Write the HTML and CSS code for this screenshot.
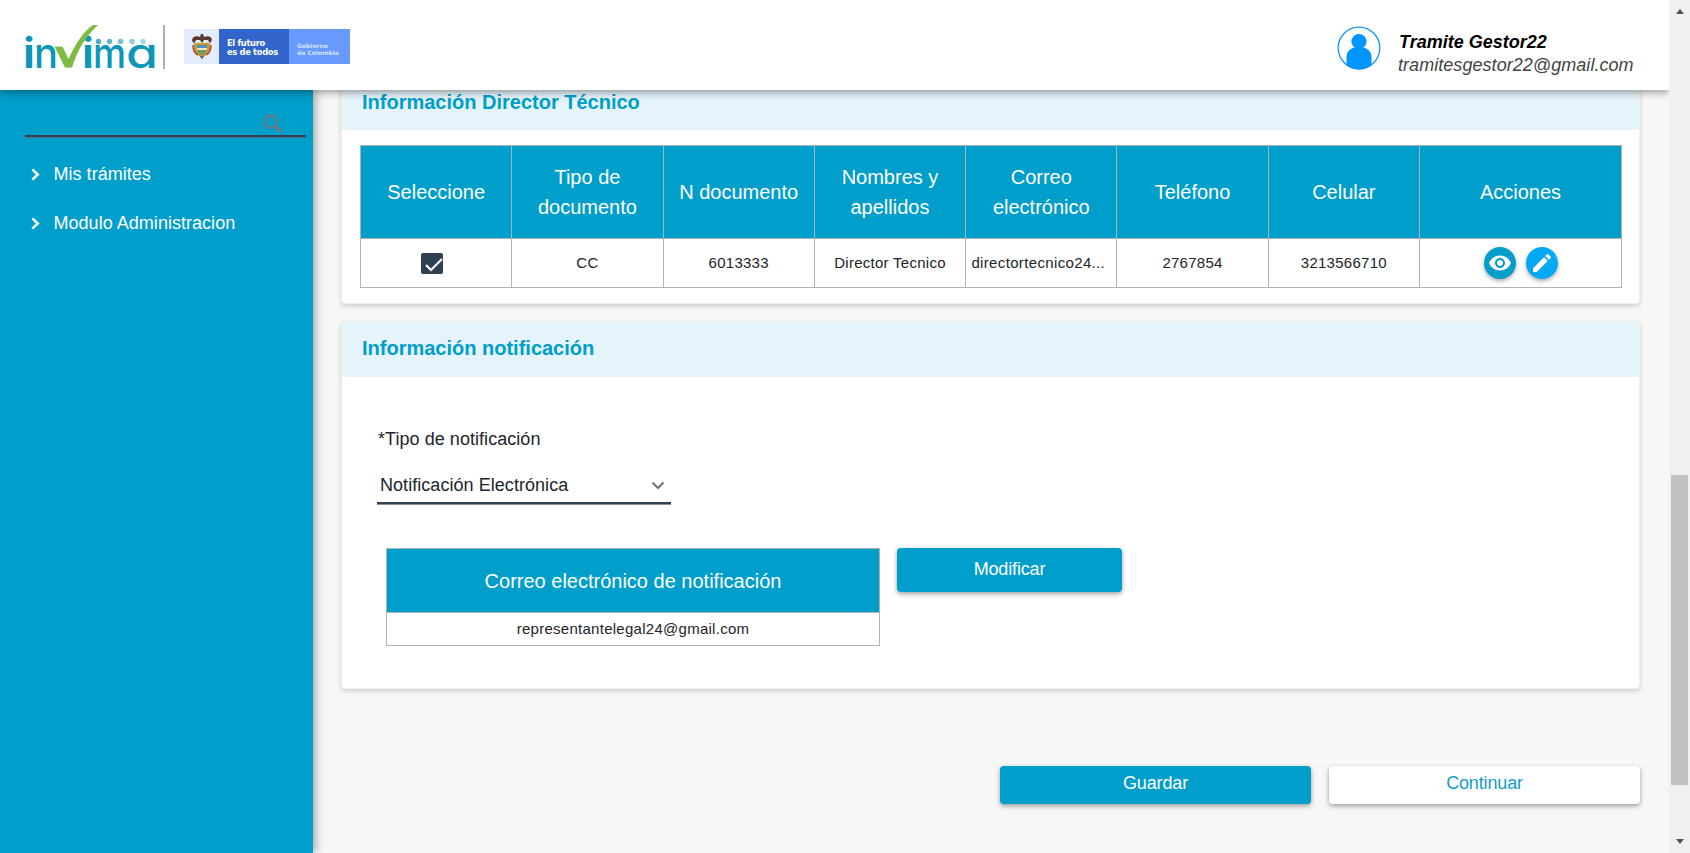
FILE: index.html
```html
<!DOCTYPE html>
<html lang="es">
<head>
<meta charset="utf-8">
<title>Invima - Trámites</title>
<link rel="stylesheet" href="styles.css">
</head>
<body>
<div class="app">
  <div class="page">
    <header class="header">
      <svg class="logo" width="146" height="50" viewBox="20 20 146 50">
        <g class="logo-text">
          <text x="23.300" y="67.500" class="logo-stem">i</text>
          <text x="34" y="67.500" textLength="24" lengthAdjust="spacingAndGlyphs">n</text>
          <text x="82.300" y="67.500" class="logo-stem">i</text>
          <text x="93" y="67.500" textLength="33" lengthAdjust="spacingAndGlyphs">m</text>
          <text x="126" y="67.500" textLength="32" lengthAdjust="spacingAndGlyphs">a</text>
        </g>
        <path d="M54.500 46.500h8l6 12.500C76 43 83 32 93 25h5C86 36 78 49 72 67.500h-7z" fill="#80ba41"/>
        <g fill="#1c9abb">
          <circle cx="98.500" cy="41.500" r="2.700" opacity=".8"/>
          <circle cx="109.500" cy="41.500" r="2.700" opacity=".7"/>
          <circle cx="120.500" cy="41.500" r="2.700" opacity=".6"/>
          <circle cx="132" cy="41.500" r="2.700" opacity=".5"/>
          <circle cx="143" cy="41.500" r="2.700" opacity=".4"/>
        </g>
        <path d="M164 25v44" stroke="#a9b0b7" stroke-width="2"/>
      </svg>
      <div class="gov">
        <div class="gov-shield">
          <svg width="24" height="28" viewBox="0 0 24 28">
            <path d="M2 8C3 3 8 4 10 5l1-3h2l1 3c3-1 7-2 8 3-1 2-2 2-2 4l-2-4h-4l-2 3-2-3H6l-2 4C4 10 2 10 2 8z" fill="#5a3a2c"/>
            <path d="M4 12c3-2 5-1 8-1s5-1 8 1c1 7-2 11-8 13C6 23 3 19 4 12z" fill="#c9982f"/>
            <path d="M7 13h10v3H7z" fill="#4b94bd"/>
            <path d="M7 16h10v2H7z" fill="#f1e7c5"/>
            <path d="M7 18h10c-1 3-3 4-5 5-2-1-4-2-5-5z" fill="#6d9b63"/>
            <path d="M3 13c0 5 1 8 5 10M21 13c0 5-1 8-5 10" fill="none" stroke="#b5433b" stroke-width="1.500"/>
            <path d="M9 23l3 2 3-2-3 4z" fill="#5a3a2c"/>
          </svg>
        </div>
        <div class="gov-motto">El futuro<br>es de todos</div>
        <div class="gov-name">Gobierno<br>de Colombia</div>
      </div>
      <div class="user">
        <svg width="44" height="44" viewBox="0 0 44 44">
          <defs><clipPath id="ring"><circle cx="22" cy="22" r="21.500"/></clipPath></defs>
          <circle cx="22" cy="22" r="20.800" fill="#fff" stroke="#0d94fb" stroke-width="1.300"/>
          <g fill="#0095ff" clip-path="url(#ring)">
            <circle cx="22" cy="15.500" r="7.600"/>
            <path d="M9.500 44V31c0-5 3.500-8.500 8-9.500h9c4.500 1 8 4.500 8 9.500v13z"/>
          </g>
        </svg>
        <div class="user-text">
          <div class="user-name">Tramite Gestor22</div>
          <div class="user-mail">tramitesgestor22@gmail.com</div>
        </div>
      </div>
    </header>
    <div class="body">
      <nav class="sidebar">
        <div class="search">
          <svg width="20" height="20" viewBox="0 0 20 20" fill="none" stroke="#73777b">
            <circle cx="7.700" cy="7.700" r="6.300" stroke-width="2"/>
            <path d="M12.300 12.300l6 6" stroke-width="2.800"/>
          </svg>
        </div>
        <a class="nav-item"><svg width="9" height="13" viewBox="0 0 9 13"><path d="M1.300 1.300L6.800 6.500l-5.500 5.200"/></svg><span>Mis trámites</span></a>
        <a class="nav-item"><svg width="9" height="13" viewBox="0 0 9 13"><path d="M1.300 1.300L6.800 6.500l-5.500 5.200"/></svg><span>Modulo Administracion</span></a>
      </nav>
      <main class="main">
        <section class="card card-director">
          <h2 class="card-title">Información Director Técnico</h2>
          <table class="grid">
            <thead>
              <tr><th>Seleccione</th><th>Tipo de documento</th><th>N documento</th><th>Nombres y apellidos</th><th>Correo electrónico</th><th>Teléfono</th><th>Celular</th><th class="col-actions">Acciones</th></tr>
            </thead>
            <tbody>
              <tr>
                <td><svg class="check" width="22" height="21" viewBox="0 0 22 21"><rect width="22" height="21" rx="2" fill="#2e4052"/><path d="M5 12l5 5L21 6" fill="none" stroke="#fff" stroke-width="2.200"/></svg></td>
                <td>CC</td><td>6013333</td><td>Director Tecnico</td><td class="mail-cell">directortecnico24...</td><td>2767854</td><td>3213566710</td>
                <td class="actions-cell">
                  <div class="actions">
                    <button class="round view"><svg width="24" height="24" viewBox="0 0 24 24"><path d="M12 4.500C7 4.500 2.730 7.610 1 12c1.730 4.390 6 7.500 11 7.500s9.270-3.110 11-7.500c-1.730-4.390-6-7.500-11-7.500zM12 17c-2.760 0-5-2.240-5-5s2.240-5 5-5 5 2.240 5 5-2.240 5-5 5zm0-8c-1.660 0-3 1.340-3 3s1.340 3 3 3 3-1.340 3-3-1.340-3-3-3z"/></svg></button>
                    <button class="round edit"><svg width="24" height="24" viewBox="0 0 24 24"><path d="M3 17.250V21h3.750L17.810 9.940l-3.750-3.750L3 17.250zM20.710 7.040c.39-.39.39-1.020 0-1.410l-2.340-2.340c-.39-.39-1.020-.39-1.410 0l-1.830 1.830 3.750 3.750 1.830-1.830z"/></svg></button>
                  </div>
                </td>
              </tr>
            </tbody>
          </table>
        </section>
        <section class="card card-notice">
          <h2 class="card-title">Información notificación</h2>
          <div class="notice">
            <div class="label">*Tipo de notificación</div>
            <div class="select"><span>Notificación Electrónica</span><svg width="14" height="10" viewBox="0 0 14 10"><path d="M1.500 1.500L7 7l5.500-5.500" fill="none" stroke="#757575" stroke-width="2.200"/></svg></div>
            <div class="notice-row">
              <table class="mail">
                <thead><tr><th>Correo electrónico de notificación</th></tr></thead>
                <tbody><tr><td>representantelegal24@gmail.com</td></tr></tbody>
              </table>
              <button class="btn modify">Modificar</button>
            </div>
          </div>
        </section>
        <div class="footer">
          <button class="btn">Guardar</button>
          <button class="btn plain">Continuar</button>
        </div>
      </main>
    </div>
  </div>
  <div class="scrollbar">
    <i class="arrow up"></i>
    <i class="thumb"></i>
    <i class="arrow down"></i>
  </div>
</div>
</body>
</html>
```
FILE: styles.css
```css
* { box-sizing: border-box; }
body { margin: 0; overflow: hidden; font: 18px "Liberation Sans", Arial, sans-serif; color: #212529; }
.app { display: flex; width: 1690px; height: 853px; background: #f7f7f7; }
.page { width: 1669px; height: 853px; display: flex; flex-direction: column; overflow: hidden; }

.header { position: relative; z-index: 3; flex: none; display: flex; align-items: flex-start; height: 90px; padding: 20px 0 0 20px; background: #fff; box-shadow: 0 2px 8px rgba(0,0,0,.42); }
.logo { display: block; overflow: visible; }
.logo-text { font-family: Inter, sans-serif; font-size: 42px; font-weight: 450; font-feature-settings: "cv11"; fill: #0b97b9; }
.logo-stem { font-weight: 700; }
.gov { display: flex; width: 166px; height: 35px; margin: 9px 0 0 18px; color: #fff; }
.gov-shield { width: 35px; padding: 3px 0 0 6px; background: #e3ecfb; }
.gov-shield svg { display: block; }
.gov-motto { width: 70px; padding: 10px 0 0 8px; background: #3265cc; font: bold 8.3px/8.800px "DejaVu Sans", sans-serif; white-space: nowrap; letter-spacing: -.3px; }
.gov-name { width: 61px; padding: 12.500px 0 0 8px; background: #6799fe; color: #d2e2ff; font: bold 6px/7.500px "DejaVu Sans", sans-serif; white-space: nowrap; letter-spacing: 0; }
.user { display: flex; gap: 16px; margin: 6px 35px 0 auto; font-style: italic; line-height: 23px; }
.user > svg { display: block; margin-left: -1px; margin-right: 1px; }
.user-text { padding-top: 5px; width: 236px; white-space: nowrap; }
.user-name { font-weight: bold; color: #000; padding-left: 1px; }
.user-mail { color: #444; letter-spacing: .05px; }

.body { flex: 1; display: flex; min-height: 0; }
.sidebar { position: relative; z-index: 2; width: 313px; flex: none; background: #009ecb; box-shadow: 2px 0 9px rgba(0,0,0,.38); }
.search { width: 281px; height: 47px; margin: 0 0 0 25px; padding: 24px 0 0 238px; border-bottom: 2px solid #2f4052; box-shadow: 0 1px 0 #4a7186; }
.search svg { display: block; }
.nav-item { display: flex; align-items: center; gap: 13.500px; height: 49px; padding-left: 31px; color: #fff; letter-spacing: .03px; }
.search + .nav-item { margin-top: 12px; }
.nav-item svg { fill: none; stroke: #fff; stroke-width: 2.500; margin-top: 1px; }
.nav-item span { padding-top: 1px; }

.main { flex: 1; padding-left: 28px; }
.card { width: 1299px; border: 1px solid #eff0e6; border-radius: 4px; background: #fff; box-shadow: 0 2px 5px rgba(0,0,0,.17); }
.card-director { height: 230px; margin-top: -16px; }
.card-notice { height: 368px; margin-top: 17px; }
.card-title { height: 55px; margin: 0; padding: 0 0 0 20px; border-radius: 3px 3px 0 0; background: #e5f4fa; color: #009ecb; font-size: 20px; line-height: 55px; }
.card-notice .card-title { line-height: 53px; }
table { border-collapse: collapse; table-layout: fixed; }
th { border: 1px solid #b1b4b7; background: #009ecb; color: #fff; font-size: 20px; font-weight: normal; line-height: 30px; padding: 0; }
td { border: 1px solid #b1b4b7; background: #fff; font-size: 15px; letter-spacing: .27px; text-align: center; padding: 0 0 2px; white-space: nowrap; }
.grid { width: 1262px; margin: 15px 0 0 18px; }
.grid th { height: 93px; padding: 0 12px; }
.grid td { height: 49px; }
.grid td.actions-cell { padding: 0 0 1px; }
.grid td.mail-cell { padding-right: 6px; letter-spacing: .35px; }
.col-actions { width: 202px; }
.check { display: block; margin: 2px auto 0; position: relative; left: -4px; }
.actions { display: flex; justify-content: center; gap: 10px; }
.round { display: flex; align-items: center; justify-content: center; width: 32px; height: 32px; padding: 0; border: 0; border-radius: 50%; box-shadow: 0 2px 4px rgba(0,0,0,.35); }
.round svg { fill: #fff; flex: none; }
.view { background: #009ecb; }
.edit { background: #03a9f4; }

.notice { padding: 51px 0 0 35px; }
.label { padding-left: 1px; line-height: 22px; letter-spacing: .05px; }
.select { display: flex; justify-content: space-between; align-items: flex-start; width: 294px; height: 30px; margin-top: 24px; padding: 0 6px 0 3px; border-bottom: 2px solid #2f4052; box-shadow: 0 1px 0 #8b959f; line-height: 22px; letter-spacing: .05px; }
.select svg { margin-top: 7px; }
.notice-row { display: flex; align-items: flex-start; gap: 17px; margin: 44px 0 0 9px; }
.mail { width: 494px; }
.mail th { height: 64px; }
.mail td { height: 33px; }
.btn { width: 311px; height: 38px; padding: 0 0 3px; border: 0; border-radius: 4px; background: #009ecb; color: #fff; font: 18px "Liberation Sans", Arial, sans-serif; letter-spacing: -.15px; box-shadow: 0 2px 5px rgba(0,0,0,.38); }
.modify { width: 225px; height: 44px; padding: 0 0 1px; }
.plain { background: #fff; color: #129cc8; }
.footer { display: flex; justify-content: flex-end; gap: 18px; margin: 77px 29px 0 0; }

.scrollbar { display: flex; flex-direction: column; align-items: center; width: 21px; height: 853px; padding: 9px 0; background: #f0f0f0; }
.arrow { border: 4.500px solid transparent; }
.up { border-top: 0; border-bottom: 5px solid #505050; }
.down { border-bottom: 0; border-top: 5px solid #505050; margin-top: auto; }
.thumb { width: 17px; height: 310px; margin-top: 461px; background: #c1c1c1; }
```
